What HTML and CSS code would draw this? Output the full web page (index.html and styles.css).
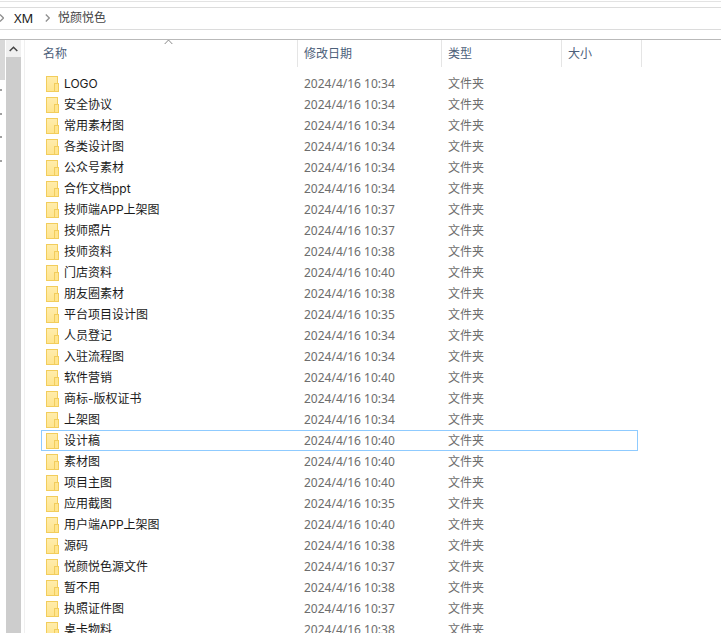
FILE: index.html
```html
<!DOCTYPE html>
<html lang="zh-CN">
<head>
<meta charset="utf-8">
<title>悦颜悦色</title>
<link rel="stylesheet" href="styles.css">
</head>
<body>
<div class="window">
  <div class="ribbon"></div>
  <div class="address">
    <svg class="crumb first" width="4" height="8" viewBox="0 0 4 8"><path d="M0 .5 3.500 4 0 7.500" fill="none" stroke="#909090" stroke-width="1.300"/></svg>
    <span class="crumb-text dark">XM</span>
    <svg class="crumb" width="5" height="8" viewBox="0 0 5 8"><path d="M.8.5 4.300 4 .8 7.500" fill="none" stroke="#909090" stroke-width="1.300"/></svg>
    <span class="crumb-text">悦颜悦色</span>
  </div>
  <div class="spacer"></div>
  <div class="main">
    <div class="nav"><i class="thumb"></i><i class="dot"></i><i class="dot"></i><i class="dot"></i><i class="dot"></i></div>
    <div class="scrollbar">
      <div class="scroll-btn"><svg width="9" height="6" viewBox="0 0 9 6"><path d="M.7 5 4.500 1.300 8.300 5" fill="none" stroke="#444" stroke-width="1.500"/></svg></div>
    </div>
    <div class="list">
      <svg class="sort" width="9" height="6" viewBox="0 0 9 6"><path d="M.7 5 4.500 1 8.300 5" fill="none" stroke="#8a8a8a" stroke-width="1"/></svg>
      <div class="header">
        <div class="hcell name">名称</div>
        <div class="hcell date">修改日期</div>
        <div class="hcell type">类型</div>
        <div class="hcell size">大小</div>
      </div>
      <div class="rows">
        <div class="row"><span class="ico"></span><span class="n">LOGO</span><span class="d">2024/4/16 10:34</span><span class="t">文件夹</span></div>
        <div class="row"><span class="ico"></span><span class="n">安全协议</span><span class="d">2024/4/16 10:34</span><span class="t">文件夹</span></div>
        <div class="row"><span class="ico"></span><span class="n">常用素材图</span><span class="d">2024/4/16 10:34</span><span class="t">文件夹</span></div>
        <div class="row"><span class="ico"></span><span class="n">各类设计图</span><span class="d">2024/4/16 10:34</span><span class="t">文件夹</span></div>
        <div class="row"><span class="ico"></span><span class="n">公众号素材</span><span class="d">2024/4/16 10:34</span><span class="t">文件夹</span></div>
        <div class="row"><span class="ico"></span><span class="n">合作文档ppt</span><span class="d">2024/4/16 10:34</span><span class="t">文件夹</span></div>
        <div class="row"><span class="ico"></span><span class="n">技师端APP上架图</span><span class="d">2024/4/16 10:37</span><span class="t">文件夹</span></div>
        <div class="row"><span class="ico"></span><span class="n">技师照片</span><span class="d">2024/4/16 10:37</span><span class="t">文件夹</span></div>
        <div class="row"><span class="ico"></span><span class="n">技师资料</span><span class="d">2024/4/16 10:38</span><span class="t">文件夹</span></div>
        <div class="row"><span class="ico"></span><span class="n">门店资料</span><span class="d">2024/4/16 10:40</span><span class="t">文件夹</span></div>
        <div class="row"><span class="ico"></span><span class="n">朋友圈素材</span><span class="d">2024/4/16 10:38</span><span class="t">文件夹</span></div>
        <div class="row"><span class="ico"></span><span class="n">平台项目设计图</span><span class="d">2024/4/16 10:35</span><span class="t">文件夹</span></div>
        <div class="row"><span class="ico"></span><span class="n">人员登记</span><span class="d">2024/4/16 10:34</span><span class="t">文件夹</span></div>
        <div class="row"><span class="ico"></span><span class="n">入驻流程图</span><span class="d">2024/4/16 10:34</span><span class="t">文件夹</span></div>
        <div class="row"><span class="ico"></span><span class="n">软件营销</span><span class="d">2024/4/16 10:40</span><span class="t">文件夹</span></div>
        <div class="row"><span class="ico"></span><span class="n">商标-版权证书</span><span class="d">2024/4/16 10:34</span><span class="t">文件夹</span></div>
        <div class="row"><span class="ico"></span><span class="n">上架图</span><span class="d">2024/4/16 10:34</span><span class="t">文件夹</span></div>
        <div class="row focused"><span class="ico"></span><span class="n">设计稿</span><span class="d">2024/4/16 10:40</span><span class="t">文件夹</span></div>
        <div class="row"><span class="ico"></span><span class="n">素材图</span><span class="d">2024/4/16 10:40</span><span class="t">文件夹</span></div>
        <div class="row"><span class="ico"></span><span class="n">项目主图</span><span class="d">2024/4/16 10:40</span><span class="t">文件夹</span></div>
        <div class="row"><span class="ico"></span><span class="n">应用截图</span><span class="d">2024/4/16 10:35</span><span class="t">文件夹</span></div>
        <div class="row"><span class="ico"></span><span class="n">用户端APP上架图</span><span class="d">2024/4/16 10:40</span><span class="t">文件夹</span></div>
        <div class="row"><span class="ico"></span><span class="n">源码</span><span class="d">2024/4/16 10:38</span><span class="t">文件夹</span></div>
        <div class="row"><span class="ico"></span><span class="n">悦颜悦色源文件</span><span class="d">2024/4/16 10:37</span><span class="t">文件夹</span></div>
        <div class="row"><span class="ico"></span><span class="n">暂不用</span><span class="d">2024/4/16 10:38</span><span class="t">文件夹</span></div>
        <div class="row"><span class="ico"></span><span class="n">执照证件图</span><span class="d">2024/4/16 10:37</span><span class="t">文件夹</span></div>
        <div class="row"><span class="ico"></span><span class="n">桌卡物料</span><span class="d">2024/4/16 10:38</span><span class="t">文件夹</span></div>
      </div>
    </div>
  </div>
</div>
</body>
</html>
```
FILE: styles.css
```css
* { box-sizing: border-box; }
html, body { margin: 0; height: 100%; overflow: hidden; background: #fff; }
body { font: 12px/16px "Noto Sans", "Noto Sans CJK SC", sans-serif; color: #1a1a1a; }
.window { height: 633px; display: flex; flex-direction: column; overflow: hidden; }
.ribbon { height: 7px; border-top: 1px solid #e3e3e3; border-bottom: 1px solid #dcdcdc; margin-top: 1px; flex: none; }
.address { height: 22px; display: flex; align-items: center; flex: none; border-bottom: 1px solid #dcdcdc; padding-bottom: 2px; }
.crumb { flex: none; margin: 0 8px 0 10px; }
.crumb.first { margin: 0 10px 0 0; }
.crumb-text { font-size: 12px; color: #444; margin-right: 3px; }
.crumb-text.dark { font-size: 13px; color: #1a1a1a; width: 21px; margin-right: 0; }
.spacer { height: 10px; flex: none; border-bottom: 1px solid #b9b9b9; }
.main { flex: 1; display: flex; min-height: 0; }
.nav { width: 6px; flex: none; display: flex; flex-direction: column; align-items: flex-start; }
.thumb { width: 5px; height: 40px; background: #d8d8d8; margin-bottom: 9px; }
.dot { width: 2px; height: 2px; background: #a0a0a0; margin-bottom: 21.500px; }
.scrollbar { width: 15px; flex: none; background: #cdcdcd; margin-right: 3px; }
.scroll-btn { height: 17px; background: #f0f0f0; display: flex; align-items: center; justify-content: center; }
.list { flex: 1; position: relative; border-left: 1px solid #f0f0f0; min-width: 0; }
.sort { position: absolute; left: 139px; top: -1px; }
.header { height: 27px; display: flex; color: #4c607a; }
.hcell { padding: 6px 0 0 6px; border-right: 1px solid #e5e5e5; flex: none; }
.hcell.name { width: 273px; padding-left: 18px; }
.hcell.date { width: 144px; }
.hcell.type { width: 120px; }
.hcell.size { width: 80px; }
.rows { padding: 6px 0 0 16px; }
.row { height: 21px; width: 597px; display: flex; align-items: center; border: 1px solid transparent; }
.row.focused { border: 1px solid #8fcbff; }
.ico { width: 12px; height: 16px; margin-left: 4px; margin-right: 1px; flex: none; position: relative; background: linear-gradient(180deg, #ffecab, #ffe58f); border: 1px solid #f2cd5c; }
.ico::after { content: ""; position: absolute; right: -2px; bottom: -1px; width: 3px; height: 7px; background: #ffe58f; border: 1px solid #f2cd5c; }
.n { width: 240px; margin-left: 5px; font-family: Inter, "Noto Sans CJK SC", sans-serif; color: #1a1a1a; flex: none; white-space: nowrap; }
.d { width: 144px; color: #6d6d6d; flex: none; white-space: nowrap; }
.t { color: #6d6d6d; flex: none; }
```
